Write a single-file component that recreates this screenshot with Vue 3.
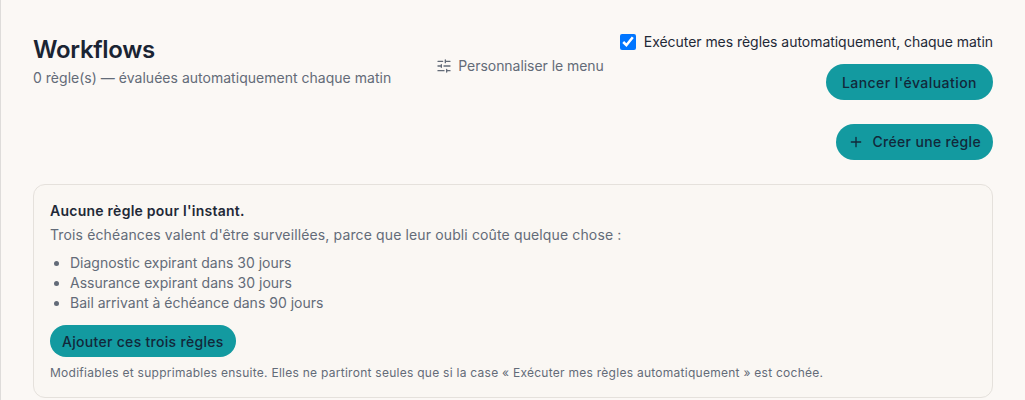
<script setup>
const rules = [
  'Diagnostic expirant dans 30 jours',
  'Assurance expirant dans 30 jours',
  'Bail arrivant à échéance dans 90 jours',
]
</script>

<template>
  <main class="page">
    <header class="head">
      <div class="intro">
        <h1>Workflows</h1>
        <p class="sub">0 règle(s) — évaluées automatiquement chaque matin</p>
      </div>
      <a class="custom">
        <svg width="16" height="16" viewBox="0 0 24 24" fill="none" stroke="currentColor" stroke-width="2" stroke-linecap="round">
          <path d="M21 5h-7M10 5H3M21 12h-9M8 12H3M21 19h-5M12 19H3M14 3v4M8 10v4M16 17v4" />
        </svg>
        <span>Personnaliser le menu</span>
      </a>
      <div class="actions">
        <label class="auto">
          <input type="checkbox" checked />
          <span>Exécuter mes règles automatiquement, chaque matin</span>
        </label>
        <button class="btn eval">Lancer l'évaluation</button>
      </div>
    </header>
    <div class="create-row">
      <button class="btn create">
        <svg width="16" height="16" viewBox="0 0 24 24" fill="none" stroke="currentColor" stroke-width="2" stroke-linecap="round">
          <path d="M5 12h14M12 5v14" />
        </svg>
        <span class="create-label">Créer une règle</span>
      </button>
    </div>
    <section class="card">
      <strong class="title">Aucune règle pour l'instant.</strong>
      <p class="lead">Trois échéances valent d'être surveillées, parce que leur oubli coûte quelque chose :</p>
      <ul>
        <li v-for="r in rules" :key="r">{{ r }}</li>
      </ul>
      <button class="btn add">Ajouter ces trois règles</button>
      <p class="note">Modifiables et supprimables ensuite. Elles ne partiront seules que si la case « Exécuter mes règles automatiquement » est cochée.</p>
    </section>
  </main>
</template>

<style>
html, body { margin: 0; background: #fbf8f5; }
</style>

<style scoped>
.page {
  box-sizing: border-box;
  height: 400px;
  overflow: hidden;
  padding: 32px 32px 0;
  border-left: 1px solid #dedcda;
  font-family: Inter, sans-serif;
  background: #fbf8f5;
  color: #1a2433;
}
.head { display: flex; align-items: flex-start; gap: 16px; }
.intro { padding-top: 2px; margin-right: auto; }
h1 { margin: 0; font-size: 24px; line-height: 32px; font-weight: 600; letter-spacing: -0.3px; color: #1a2433; }
.sub { margin: 2px 0 0; font-size: 14px; line-height: 20px; letter-spacing: 0.02px; color: #636b78; }
.custom { display: flex; align-items: center; gap: 6px; margin-top: 24px; font-size: 14px; line-height: 20px; letter-spacing: -0.05px; color: #636b78; }
.actions { display: flex; flex-direction: column; align-items: flex-end; gap: 12px; }
.auto { display: flex; align-items: center; gap: 8px; font-size: 14px; line-height: 20px; letter-spacing: -0.04px; color: #1f2937; }
.auto input { width: 16px; height: 16px; margin: 0; accent-color: #0075ff; }
.btn {
  border: 0;
  border-radius: 999px;
  background: #139aa0;
  color: #12283a;
  font-family: inherit;
  font-weight: 500;
  font-size: 14px;
  letter-spacing: 0.33px;
}
.eval { height: 36px; padding: 0 16px; letter-spacing: 0.46px; }
.create-row { display: flex; justify-content: flex-end; margin-top: 24px; }
.create { height: 36px; padding: 0 12px; display: flex; align-items: center; gap: 8px; }
.create-label { margin-bottom: 2px; }
.card {
  margin-top: 24px;
  padding: 16px;
  border: 1px solid #e5e1dc;
  border-radius: 12px;
  background: #faf7f3;
}
.title { display: block; font-size: 14px; line-height: 20px; font-weight: 600; letter-spacing: 0.25px; color: #1f2937; }
.lead { margin: 4px 0 0; font-size: 14px; line-height: 20px; letter-spacing: 0.13px; color: #636b78; }
ul { margin: 8px 0 0; padding: 0 0 0 20px; font-size: 14px; line-height: 20px; color: #636b78; }
.add { display: block; margin-top: 12px; height: 32px; padding: 0 12px; letter-spacing: 0.3px; }
.note { margin: 8px 0 0; font-size: 12px; line-height: 16px; letter-spacing: 0.265px; color: #636b78; }
</style>
